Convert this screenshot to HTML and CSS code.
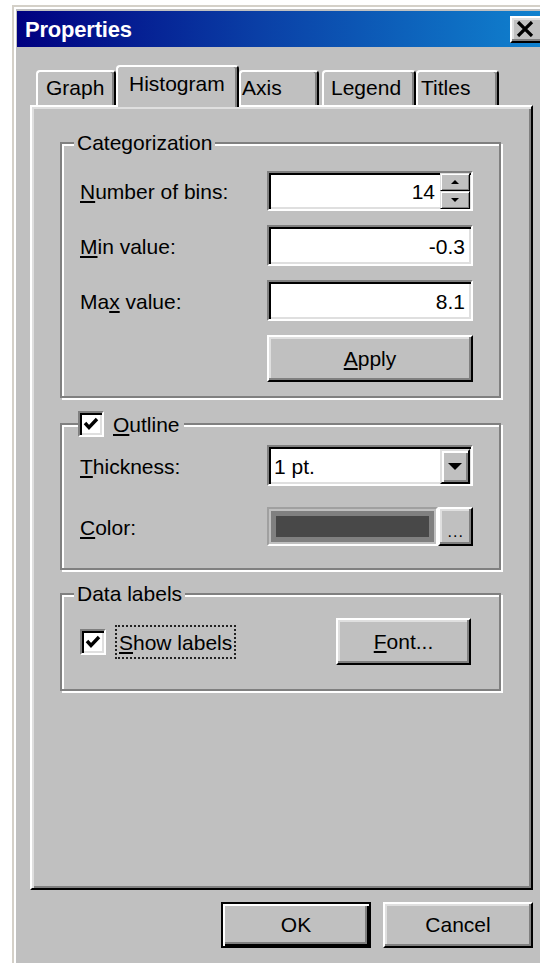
FILE: index.html
```html
<!DOCTYPE html>
<html lang="en">
<head>
<meta charset="utf-8">
<title>Properties</title>
<link rel="stylesheet" href="styles.css">
</head>
<body>
<div class="window">
  <div class="titlebar">
    <span class="title">Properties</span>
    <button class="close-btn" aria-label="Close">
      <svg width="18" height="16" viewBox="0 0 18 16"><path d="M2 1 L16 15 M16 1 L2 15" stroke="#000" stroke-width="3.2" fill="none"/></svg>
    </button>
  </div>

  <div class="tabs">
    <div class="tab tab-graph">Graph</div>
    <div class="tab tab-histogram active">Histogram</div>
    <div class="tab tab-axis">Axis</div>
    <div class="tab tab-legend">Legend</div>
    <div class="tab tab-titles">Titles</div>
  </div>

  <div class="panel">
    <fieldset class="group group-cat">
      <legend class="legend-text">Categorization</legend>
      <div class="form-grid cat-grid">
        <span class="label"><u>N</u>umber of bins:</span>
        <div class="field spin">
          <span class="value">14</span>
          <div class="spin-btns">
            <span class="spin-btn"><svg width="8" height="4" viewBox="0 0 8 4"><path d="M4 0 L8 4 L0 4 Z" fill="#000"/></svg></span>
            <span class="spin-btn"><svg width="8" height="4" viewBox="0 0 8 4"><path d="M0 0 L8 0 L4 4 Z" fill="#000"/></svg></span>
          </div>
        </div>

        <span class="label"><u>M</u>in value:</span>
        <div class="field"><span class="value">-0.3</span></div>

        <span class="label">Ma<u>x</u> value:</span>
        <div class="field"><span class="value">8.1</span></div>

        <span></span>
        <button class="btn btn-apply"><u>A</u>pply</button>
      </div>
    </fieldset>

    <fieldset class="group group-outline">
      <legend class="legend-check">
        <span class="checkbox"><svg width="18" height="18" viewBox="0 0 18 18"><path d="M3 8 L7 12.5 L15 4" stroke="#000" stroke-width="3.4" fill="none"/></svg></span>
        <span class="check-text"><u>O</u>utline</span>
      </legend>
      <div class="form-grid outline-grid">
        <span class="label"><u>T</u>hickness:</span>
        <div class="field combo">
          <span class="combo-text">1 pt.</span>
          <span class="drop-btn"><svg width="14" height="8" viewBox="0 0 14 8"><path d="M0 0 L14 0 L7 7 Z" fill="#000"/></svg></span>
        </div>

        <span class="label"><u>C</u>olor:</span>
        <div class="color-row">
          <div class="color-well"><span class="swatch"></span></div>
          <button class="btn btn-dots">...</button>
        </div>
      </div>
    </fieldset>

    <fieldset class="group group-labels">
      <legend class="legend-text">Data labels</legend>
      <div class="labels-row">
        <span class="checkbox"><svg width="18" height="18" viewBox="0 0 18 18"><path d="M3 8 L7 12.5 L15 4" stroke="#000" stroke-width="3.4" fill="none"/></svg></span>
        <span class="focus-text"><u>S</u>how labels</span>
        <button class="btn btn-font"><u>F</u>ont...</button>
      </div>
    </fieldset>
  </div>

  <div class="dialog-buttons">
    <button class="btn btn-default">OK</button>
    <button class="btn btn-cancel">Cancel</button>
  </div>
</div>
</body>
</html>
```

FILE: styles.css
```css
* {
  box-sizing: border-box;
}

html,
body {
  margin: 0;
  background: #fff;
  overflow: hidden;
}

body {
  font-family: "Liberation Sans", Arial, sans-serif;
  font-size: 21px;
  line-height: 24px;
  color: #000;
  padding-top: 5px;
}

u {
  text-decoration-thickness: 2px;
  text-underline-offset: 2px;
}

button {
  font: inherit;
  color: inherit;
  padding: 0;
  margin: 0;
}

/* ---------- window frame (runs on below the visible area) ---------- */
.window {
  margin-left: 12px;
  width: 545px;
  height: 958px;
  background: #c0c0c0;
  border: 2px solid;
  border-bottom: 0;
  border-color: #d4d0c8 #404040 #404040 #d4d0c8;
  box-shadow: inset 2px 2px #fff, inset -2px 0 #808080;
  padding: 4px 3px 0 3px;
}

.titlebar {
  height: 36px;
  display: flex;
  align-items: center;
  justify-content: space-between;
  padding: 0 4px 0 8px;
  background: linear-gradient(90deg, #000080 0%, #0a3fa6 45%, #1084d0 100%);
}

.title {
  color: #fff;
  font-weight: bold;
  font-size: 22px;
  letter-spacing: -0.2px;
  padding-top: 2px;
}

.close-btn {
  width: 38px;
  height: 27px;
  background: #c0c0c0;
  border: 2px solid;
  border-color: #fff #000 #000 #fff;
  box-shadow: inset -2px -2px #808080, inset 2px 2px #dfdfdf;
  display: flex;
  align-items: center;
  justify-content: flex-start;
  padding-left: 4px;
}

/* ---------- tabs ---------- */
.tabs {
  margin-top: 18px;
  height: 40px;
  display: flex;
  align-items: flex-end;
  padding-left: 19px;
}

.tab {
  height: 35px;
  background: #c0c0c0;
  border-top: 2px solid #fff;
  border-left: 2px solid #fff;
  border-right: 2px solid #000;
  box-shadow: inset -2px 0 #808080;
  border-radius: 4px 4px 0 0;
  display: flex;
  align-items: center;
  padding-bottom: 1px;
  white-space: nowrap;
}

.tab.active {
  height: 42px;
  margin-bottom: -2px;
  position: relative;
  z-index: 1;
  padding-bottom: 6px;
}

.tab-graph { width: 80px; padding-left: 8px; }
.tab-histogram { width: 123px; padding-left: 11px; }
.tab-axis { width: 80px; padding-left: 1px; }
.tab-legend { width: 94px; margin-left: 3px; padding-left: 7px; }
.tab-titles { width: 83px; padding-left: 3px; }

/* ---------- tab page ---------- */
.panel {
  margin: 0 19px 0 13px;
  height: 785px;
  border: 2px solid;
  border-color: #fff #000 #000 #fff;
  box-shadow: inset 2px 2px #dfdfdf, inset -2px -2px #808080;
  padding: 24px 30px 0 28px;
}

.group {
  margin: 0;
  border: 2px solid #808080;
  box-shadow: inset 2px 2px #fff, 2px 2px #fff;
  min-width: 0;
}

.group legend {
  background: #c0c0c0;
}

.legend-text {
  padding: 0 3px;
  margin-left: -6px;
}

.group-cat {
  padding: 16px 28px 14px 18px;
}

.group-outline {
  margin-top: 13px;
  padding: 8px 28px 22px 18px;
}

.group-labels {
  margin-top: 12px;
  padding: 12px 28px 24px 18px;
}

.form-grid {
  display: grid;
  grid-template-columns: 187px 206px;
  align-items: center;
}

.cat-grid {
  grid-template-rows: 40px 41px 41px 47px;
  row-gap: 14px;
}

.outline-grid {
  grid-template-rows: 41px 39px;
  row-gap: 21px;
}

.label {
  padding-top: 2px;
}

/* ---------- sunken edit fields ---------- */
.field {
  height: 100%;
  background: #fff;
  border: 2px solid;
  border-color: #808080 #fff #fff #808080;
  box-shadow: inset 2px 2px #000, inset -2px -2px #dfdfdf;
  display: flex;
  align-items: center;
  justify-content: flex-end;
  padding: 2px 6px 0 4px;
}

.spin {
  padding: 0 1px 0 4px;
}

.spin .value {
  padding-right: 5px;
  padding-top: 2px;
}

.spin-btns {
  width: 30px;
  align-self: stretch;
  display: flex;
  flex-direction: column;
}

.spin-btn {
  flex: 1;
  background: #c0c0c0;
  border: 1px solid;
  border-color: #dfdfdf #000 #000 #dfdfdf;
  box-shadow: inset 1px 1px #fff, inset -1px -1px #808080;
  display: flex;
  align-items: center;
  justify-content: center;
}

.combo {
  justify-content: space-between;
  padding: 0 1px 0 5px;
}

.combo-text {
  padding-top: 2px;
}

.drop-btn {
  width: 30px;
  align-self: stretch;
  margin: 2px 0 0;
  background: #c0c0c0;
  border: 2px solid;
  border-color: #dfdfdf #000 #000 #dfdfdf;
  box-shadow: inset 2px 2px #fff, inset -2px -2px #808080;
  display: flex;
  align-items: center;
  justify-content: center;
}

/* ---------- colour picker ---------- */
.color-row {
  height: 100%;
  display: flex;
}

.color-well {
  width: 173px;
  height: 100%;
  border: 2px solid;
  border-color: #a0a0a0 #fff #fff #a0a0a0;
  background: #c0c0c0;
  padding: 2px;
}

.swatch {
  display: block;
  height: 100%;
  background: #484848;
  border: 5px solid #808080;
}

.btn {
  background: #c0c0c0;
  border: 2px solid;
  border-color: #fff #000 #000 #fff;
  box-shadow: inset -2px -2px #808080, inset 2px 2px #dfdfdf;
  text-align: center;
}

.btn-apply {
  height: 47px;
  width: 206px;
}

.btn-dots {
  width: 35px;
  height: 100%;
  font-size: 16px;
  line-height: 16px;
  padding-top: 10px;
  letter-spacing: 1px;
}

/* ---------- checkboxes ---------- */
.checkbox {
  width: 26px;
  height: 26px;
  flex: none;
  background: #fff;
  border: 2px solid;
  border-color: #808080 #fff #fff #808080;
  box-shadow: inset 2px 2px #000, inset -2px -2px #dfdfdf;
  display: flex;
  align-items: center;
  justify-content: center;
}

.legend-check {
  display: flex;
  align-items: center;
  padding: 0 4px 0 0;
  margin-left: -2px;
}

.check-text {
  margin-left: 9px;
  padding-top: 2px;
}

.labels-row {
  height: 47px;
  display: flex;
  align-items: center;
}

.focus-text {
  margin-left: 9px;
  padding: 4px 2px 2px;
  border: 2px dotted #222;
}

.btn-font {
  margin-left: auto;
  width: 135px;
  height: 47px;
}

/* ---------- dialog buttons ---------- */
.dialog-buttons {
  margin: 12px 19px 0 0;
  display: flex;
  justify-content: flex-end;
  gap: 12px;
}

.dialog-buttons .btn {
  width: 150px;
  height: 46px;
}

.btn-default {
  border-color: #000;
  box-shadow: inset 2px 2px #fff, inset -2px -2px #000, inset -4px -4px #808080;
}
```
